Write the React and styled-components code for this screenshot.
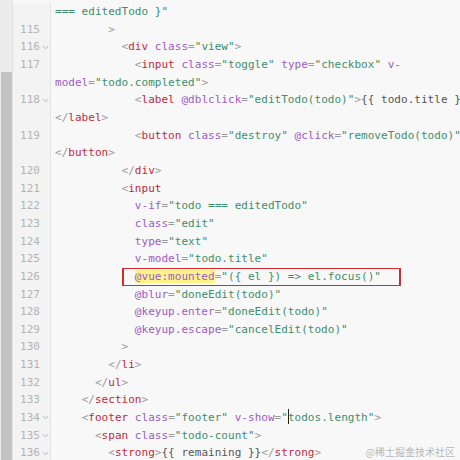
import React from 'react';
import styled, { createGlobalStyle } from 'styled-components';

const GlobalStyle = createGlobalStyle`
  html, body {
    margin: 0;
    padding: 0;
    background: #f8f8f8;
    overflow: hidden;
  }
`;

const colors = {
  p: '#9a9a9a',
  t: '#c2283f',
  a: '#9b5cc4',
  s: '#3d8f6c',
  x: '#555555',
};

// each line: [lineNo | null, fold, indent, parts]
const p = v => ['p', v];
const t = v => ['t', v];
const a = v => ['a', v];
const s = v => ['s', v];
const x = v => ['x', v];
const sp = ['x', ' '];

const lines = [
  [null, false, 0, [s('=== editedTodo }"')]],
  [115, false, 8, [p('>')]],
  [116, true, 10, [p('<'), t('div'), sp, a('class'), p('='), s('"view"'), p('>')]],
  [117, false, 12, [p('<'), t('input'), sp, a('class'), p('='), s('"toggle"'), sp, a('type'), p('='), s('"checkbox"'), sp, a('v-')]],
  [null, false, 0, [a('model'), p('='), s('"todo.completed"'), p('>')]],
  [118, true, 12, [p('<'), t('label'), sp, a('@dblclick'), p('='), s('"editTodo(todo)"'), p('>'), x('{{ todo.title }}')]],
  [null, false, 0, [p('</'), t('label'), p('>')]],
  [119, false, 12, [p('<'), t('button'), sp, a('class'), p('='), s('"destroy"'), sp, a('@click'), p('='), s('"removeTodo(todo)"'), p('>')]],
  [null, false, 0, [p('</'), t('button'), p('>')]],
  [120, false, 10, [p('</'), t('div'), p('>')]],
  [121, false, 10, [p('<'), t('input')]],
  [122, false, 12, [a('v-if'), p('='), s('"todo === editedTodo"')]],
  [123, false, 12, [a('class'), p('='), s('"edit"')]],
  [124, false, 12, [a('type'), p('='), s('"text"')]],
  [125, false, 12, [a('v-model'), p('='), s('"todo.title"')]],
  [126, false, 10, 'boxed'],
  [127, false, 12, [a('@blur'), p('='), s('"doneEdit(todo)"')]],
  [128, false, 12, [a('@keyup.enter'), p('='), s('"doneEdit(todo)"')]],
  [129, false, 12, [a('@keyup.escape'), p('='), s('"cancelEdit(todo)"')]],
  [130, false, 10, [p('>')]],
  [131, false, 8, [p('</'), t('li'), p('>')]],
  [132, false, 6, [p('</'), t('ul'), p('>')]],
  [133, false, 4, [p('</'), t('section'), p('>')]],
  [134, true, 4, 'footer'],
  [135, true, 6, [p('<'), t('span'), sp, a('class'), p('='), s('"todo-count"'), p('>')]],
  [136, true, 8, [p('<'), t('strong'), p('>'), x('{{ remaining }}'), p('</'), t('strong'), p('>')]],
];

function Tokens({ parts }) {
  return parts.map(([kind, text], i) => (
    <Token key={i} $kind={kind}>
      {text}
    </Token>
  ));
}

function Fold() {
  return (
    <FoldIcon width="7" height="5" viewBox="0 0 7 5">
      <path d="M0.8 1 L3.5 3.8 L6.2 1" fill="none" stroke="#b4b4b4" strokeWidth="1" />
    </FoldIcon>
  );
}

function CodeContent({ indent, parts }) {
  const pad = ' '.repeat(indent);
  if (parts === 'boxed') {
    return (
      <>
        {pad}
        <Boxed>
          {'  '}
          <Highlight>
            <Token $kind="a">@vue:mounted</Token>
          </Highlight>
          <Tokens parts={[p('='), s('"({ el }) => el.focus()"')]} />
        </Boxed>
      </>
    );
  }
  if (parts === 'footer') {
    return (
      <>
        {pad}
        <Tokens parts={[p('<'), t('footer'), sp, a('class'), p('='), s('"footer"'), sp, a('v-show'), p('='), s('"')]} />
        <Cursor />
        <Tokens parts={[s('todos.length"'), p('>')]} />
      </>
    );
  }
  return (
    <>
      {pad}
      <Tokens parts={parts} />
    </>
  );
}

export default function App() {
  return (
    <>
      <GlobalStyle />
      <Screen>
        <ScrollStrip>
          <ScrollThumb />
        </ScrollStrip>
        <Editor>
          {lines.map(([n, fold, indent, parts], i) => (
            <Row key={i}>
              <Gutter>
                <LineNo>{n}</LineNo>
                {fold && <Fold />}
              </Gutter>
              <Code>
                <CodeContent indent={indent} parts={parts} />
              </Code>
            </Row>
          ))}
        </Editor>
        <Watermark>@稀土掘金技术社区</Watermark>
      </Screen>
    </>
  );
}

// Component Styles
const Screen = styled.div`
  position: relative;
  width: 460px;
  height: 460px;
  display: flex;
  overflow: hidden;
  background: #f8f8f8;
`;

const ScrollStrip = styled.div`
  width: 13px;
  flex: none;
  background: #ececec;
  display: flex;
  flex-direction: column;
  padding-top: 72px;
  box-sizing: border-box;
  border-right: 1px solid #e2e2e2;
`;

const ScrollThumb = styled.div`
  flex: 1;
  margin-left: 1px;
  background: #c3c3c3;
`;

const Editor = styled.div`
  flex: 1;
  padding-top: 3px;
  font-family: 'DejaVu Sans Mono', 'Liberation Mono', monospace;
  font-size: 11px;
  letter-spacing: 0.03px;
`;

const Row = styled.div`
  display: grid;
  grid-template-columns: 38px 1fr;
  height: 17.67px;
  line-height: 17.67px;
`;

const Gutter = styled.div`
  display: flex;
  align-items: center;
  background: #f3f3f3;
  border-right: 1px solid #e4e4e4;
`;

const LineNo = styled.span`
  width: 27px;
  text-align: right;
  color: #b3b3b3;
  flex: none;
`;

const FoldIcon = styled.svg`
  margin-left: 2px;
  flex: none;
`;

const Code = styled.div`
  padding-left: 4px;
  white-space: pre;
  overflow: hidden;
  color: #555;
`;

const Token = styled.span`
  color: ${props => colors[props.$kind]};
`;

const Highlight = styled.span`
  background: #fff38a;
`;

const Boxed = styled.span`
  position: relative;
  display: inline-block;
  line-height: 17.67px;
  &::after {
    content: '';
    position: absolute;
    top: -1px;
    bottom: -1px;
    left: 0;
    right: -20px;
    border: 2px solid #d42a30;
  }
`;

const Cursor = styled.span`
  display: inline-block;
  width: 1px;
  height: 15px;
  margin-right: -1px;
  vertical-align: -3px;
  background: #222;
`;

const Watermark = styled.div`
  position: absolute;
  right: 5px;
  bottom: 1px;
  font-family: 'Noto Sans CJK SC', sans-serif;
  font-size: 10px;
  color: rgba(170, 170, 170, 0.85);
`;
